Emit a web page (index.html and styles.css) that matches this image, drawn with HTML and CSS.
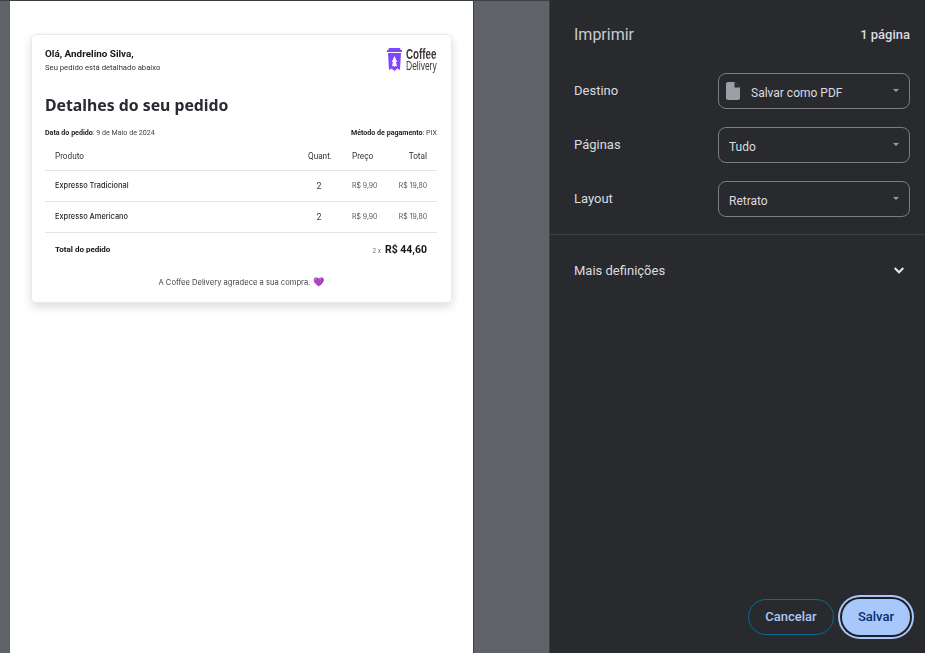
FILE: index.html
```html
<!DOCTYPE html>
<html lang="pt-BR">
<head>
    <meta charset="UTF-8">
    <title>Imprimir</title>
    <link rel="stylesheet" href="styles.css">
</head>
<body>
    <main class="preview">
        <div class="sheet">
            <div class="card">
                <div class="card-top">
                    <div>
                        <div class="hello">Olá, Andrelino Silva,</div>
                        <div class="hello-sub">Seu pedido está detalhado abaixo</div>
                    </div>
                    <div class="logo">
                        <svg width="15" height="23" viewBox="0 0 15 23">
                            <path fill="#8047f8" d="M2 0h11l.6 2H15v2H0V2h1.400zM1 5h13l-1 17-2.800-1.600L7.500 23l-2.700-2.600L2 22z"/>
                            <path fill="#fff" d="M7.500 8l2.700 6H9l1 4.500-1.600-.8-.9 1.300-.9-1.300-1.600.8 1-4.500H4.800z"/>
                        </svg>
                        <div class="logo-text">
                            <span class="logo-a">Coffee</span>
                            <span class="logo-b">Delivery</span>
                        </div>
                    </div>
                </div>

                <h1 class="title">Detalhes do seu pedido</h1>

                <div class="meta">
                    <span><b>Data do pedido</b>: 9 de Maio de 2024</span>
                    <span><b>Método de pagamento</b>: PIX</span>
                </div>

                <table class="items">
                    <thead>
                        <tr>
                            <th class="c-name">Produto</th>
                            <th class="c-qty">Quant.</th>
                            <th class="c-price">Preço</th>
                            <th class="c-total">Total</th>
                        </tr>
                    </thead>
                    <tbody>
                        <tr>
                            <td class="c-name">Expresso Tradicional</td>
                            <td class="c-qty">2</td>
                            <td class="c-price">R$ 9,90</td>
                            <td class="c-total">R$ 19,80</td>
                        </tr>
                        <tr>
                            <td class="c-name">Expresso Americano</td>
                            <td class="c-qty">2</td>
                            <td class="c-price">R$ 9,90</td>
                            <td class="c-total">R$ 19,80</td>
                        </tr>
                    </tbody>
                    <tfoot>
                        <tr>
                            <td class="c-name">Total do pedido</td>
                            <td class="c-sum" colspan="3"><small>2 x</small> <b>R$ 44,60</b></td>
                        </tr>
                    </tfoot>
                </table>

                <p class="thanks">A Coffee Delivery agradece a sua compra. <span class="heart">💜</span></p>
            </div>
        </div>
    </main>

    <aside class="panel">
        <header class="panel-head">
            <span class="panel-title">Imprimir</span>
            <span class="panel-count">1 página</span>
        </header>

        <div class="field">
            <span class="field-label">Destino</span>
            <div class="select">
                <svg class="file-icon" width="14" height="18" viewBox="0 0 14 18">
                    <path fill="#9aa0a6" d="M2 0h7l5 5v11a2 2 0 0 1-2 2H2a2 2 0 0 1-2-2V2a2 2 0 0 1 2-2z"/>
                    <path fill="#292a2d" d="M8.500 0H9l5 5v.5H8.500z"/>
                </svg>
                <span>Salvar como PDF</span>
            </div>
        </div>
        <div class="field">
            <span class="field-label">Páginas</span>
            <div class="select"><span>Tudo</span></div>
        </div>
        <div class="field">
            <span class="field-label">Layout</span>
            <div class="select"><span>Retrato</span></div>
        </div>

        <div class="more">
            <span>Mais definições</span>
            <svg width="10" height="7" viewBox="0 0 10 7">
                <path fill="none" stroke="#e8eaed" stroke-width="2" d="M.7 1l4.300 4.300L9.300 1"/>
            </svg>
        </div>

        <footer class="actions">
            <button class="btn btn-cancel">Cancelar</button>
            <button class="btn btn-save">Salvar</button>
        </footer>
    </aside>
</body>
</html>
```

FILE: styles.css
```css
* {
    box-sizing: border-box;
}

html, body {
    height: 100%;
}

body {
    margin: 0;
    display: flex;
    overflow: hidden;
    font-family: Roboto, sans-serif;
    background-color: #292a2d;
}

/* preview side */
.preview {
    width: 549px;
    height: 653px;
    padding-left: 10px;
    overflow: hidden;
    background-color: #5f6368;
    border-top: 1px solid #3c4043;
}

.sheet {
    width: 464px;
    height: 700px;
    padding: 33px 21px 0;
    background-color: #fff;
    border-right: 1px solid #3c4043;
    color: #1f2024;
}

/* the print preview is a scaled bitmap, so its text is a little soft */
.card {
    width: 421px;
    height: 269px;
    padding: 12px 14px 0 13px;
    border: 1px solid #e9e9ea;
    border-radius: 5px;
    box-shadow: 0 4px 10px rgba(0, 0, 0, 0.14);
    filter: blur(0.25px);
}

.card-top {
    display: flex;
    justify-content: space-between;
}

.hello {
    font-size: 9.900px;
    font-weight: 700;
    line-height: 14px;
    color: #16171a;
}

.hello-sub {
    margin-top: 2px;
    font-size: 7.700px;
    line-height: 10px;
    color: #333;
}

.logo {
    display: flex;
    gap: 4px;
    margin-top: 1px;
}

.logo-text {
    display: flex;
    flex-direction: column;
    width: 31px;
    font-family: "Liberation Sans", sans-serif;
    color: #403937;
    white-space: nowrap;
}

/* the real logo uses a condensed face, so squeeze the wide one */
.logo-a,
.logo-b {
    transform-origin: left center;
}

.logo-a {
    font-size: 14px;
    font-weight: 700;
    line-height: 12px;
    transform: scaleX(0.7);
}

.logo-b {
    font-size: 12.500px;
    line-height: 12px;
    transform: scaleX(0.68);
}

.title {
    margin: 20px 0 0;
    font-family: "Noto Sans", sans-serif;
    font-size: 15.800px;
    font-weight: 700;
    line-height: 24px;
    color: #272a31;
}

.meta {
    display: flex;
    justify-content: space-between;
    margin-top: 11px;
    font-size: 7.100px;
    line-height: 9px;
    color: #444;
}

.meta b {
    color: #222;
}

.items {
    width: 392px;
    margin-top: 6px;
    border-collapse: collapse;
    table-layout: fixed;
}

.items th {
    height: 27px;
    font-size: 8.200px;
    font-weight: 400;
    color: #333;
}

.items td {
    height: 31px;
    border-top: 1px solid #e4e4e5;
    font-size: 7.500px;
    color: #444;
}

.c-name {
    width: 252px;
    padding-left: 10px;
    text-align: left;
}

.items td.c-name {
    font-family: Inter, sans-serif;
    font-size: 7.400px;
    font-weight: 500;
    color: #1f2024;
}

.c-qty {
    width: 44px;
    text-align: center;
}

.items th.c-qty {
    padding-left: 3px;
}

.items td.c-qty {
    font-size: 9px;
}

.c-price {
    width: 52px;
    padding-left: 11px;
    text-align: left;
}

.c-total {
    padding-right: 10px;
    text-align: right;
}

.items td.c-price,
.items td.c-total {
    font-family: Inter, sans-serif;
    font-size: 6.900px;
    color: #55565a;
}

.items tfoot td {
    height: 35px;
}

.items tfoot td.c-name {
    font-family: Roboto, sans-serif;
    font-size: 8px;
    font-weight: 700;
    color: #111;
}

.c-sum {
    padding-right: 10px;
    text-align: right;
}

.c-sum small {
    margin-right: 2px;
    font-size: 6.500px;
    color: #777;
}

.c-sum b {
    font-size: 10.500px;
    font-weight: 700;
    color: #16171a;
}

.thanks {
    margin: 8px 0 0;
    font-family: Inter, sans-serif;
    font-size: 7.600px;
    line-height: 14px;
    text-align: center;
    color: #444;
}

.heart {
    color: #9a3fc0;
    font-size: 9px;
}

/* settings side */
.panel {
    display: flex;
    flex-direction: column;
    width: 376px;
    height: 653px;
    border-left: 1px solid #3c4043;
    color: #dadce0;
    font-size: 13px;
}

.panel-head {
    display: flex;
    justify-content: space-between;
    align-items: center;
    height: 70px;
    padding: 0 15px 1px 24px;
}

.panel-title {
    font-size: 16px;
    color: #c8cbcf;
}

.panel-count {
    font-weight: 500;
    color: #dadce0;
}

.field {
    display: flex;
    align-items: center;
    justify-content: space-between;
    height: 36px;
    margin: 3px 15px 15px 24px;
}

.field-label {
    margin-top: -2px;
}

.select {
    position: relative;
    display: flex;
    align-items: center;
    gap: 11px;
    width: 192px;
    height: 36px;
    padding: 4px 10px 0;
    border: 1px solid #7a7d81;
    border-radius: 8px;
    font-size: 12px;
}

.select::after {
    content: "";
    position: absolute;
    top: 15px;
    right: 10px;
    border-style: solid;
    border-width: 3.500px 3.500px 0;
    border-color: #9aa0a6 transparent transparent;
}

.file-icon {
    margin: -4px 0 0 -3px;
}

.more {
    display: flex;
    justify-content: space-between;
    align-items: center;
    height: 72px;
    margin-top: 2px;
    padding: 0 21px 0 24px;
    border-top: 1px solid #3c4043;
}

.actions {
    display: flex;
    justify-content: flex-end;
    gap: 8px;
    margin-top: auto;
    padding: 0 15px 18px 0;
}

.btn {
    height: 36px;
    padding-bottom: 3px;
    border-radius: 18px;
    font-family: Roboto, sans-serif;
    font-size: 13px;
    font-weight: 500;
}

.btn-cancel {
    width: 86px;
    border: 1px solid #066b98;
    background: transparent;
    color: #a8c7fa;
}

.btn-save {
    width: 68px;
    border: 0;
    background-color: #a8c7fa;
    color: #062e6f;
    box-shadow: 0 0 0 2px #1f2023, 0 0 0 4px #a8c7fa;
}
```
